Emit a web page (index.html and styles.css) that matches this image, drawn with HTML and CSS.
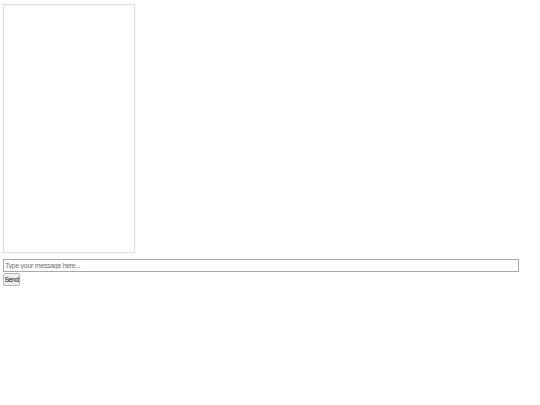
FILE: index.html
```html
<!DOCTYPE html>
<html>
<head>
<meta charset="utf-8">
<link rel="stylesheet" href="styles.css">
</head>
<body>
<div class="chat-log"></div>
<div class="composer">
  <input class="msg-input" type="text" placeholder="Type your message here...">
  <button class="send-btn">Send</button>
</div>
</body>
</html>
```
FILE: styles.css
```css
html, body { margin: 0; padding: 0; background: #fff; }
body { padding: 4px 3px; font-family: "Liberation Sans", Arial, sans-serif; }
.chat-log {
  width: 130px;
  height: 247px;
  border: 1px solid #dedede;
}
.composer {
  margin-top: 6px;
  display: flex;
  flex-direction: column;
  align-items: flex-start;
}
.msg-input {
  box-sizing: border-box;
  width: 516px;
  height: 13px;
  margin: 0;
  padding: 0 1px;
  border: 1px solid #a9a9a9;
  font-family: "Liberation Sans", Arial, sans-serif;
  font-size: 7px;
  letter-spacing: -0.3px;
  color: #333;
  outline: none;
}
.msg-input::placeholder { color: #6f6f6f; }
.send-btn {
  box-sizing: border-box;
  margin: 1px 0 0 0;
  width: 17px;
  height: 13px;
  padding: 0;
  border: 1px solid #b8b8b8;
  border-radius: 2px;
  background: #efefef;
  font-family: "Liberation Sans", Arial, sans-serif;
  font-size: 6.8px;
  font-weight: normal;
  letter-spacing: -0.45px;
  text-align: center;
  color: #111;
}
```
